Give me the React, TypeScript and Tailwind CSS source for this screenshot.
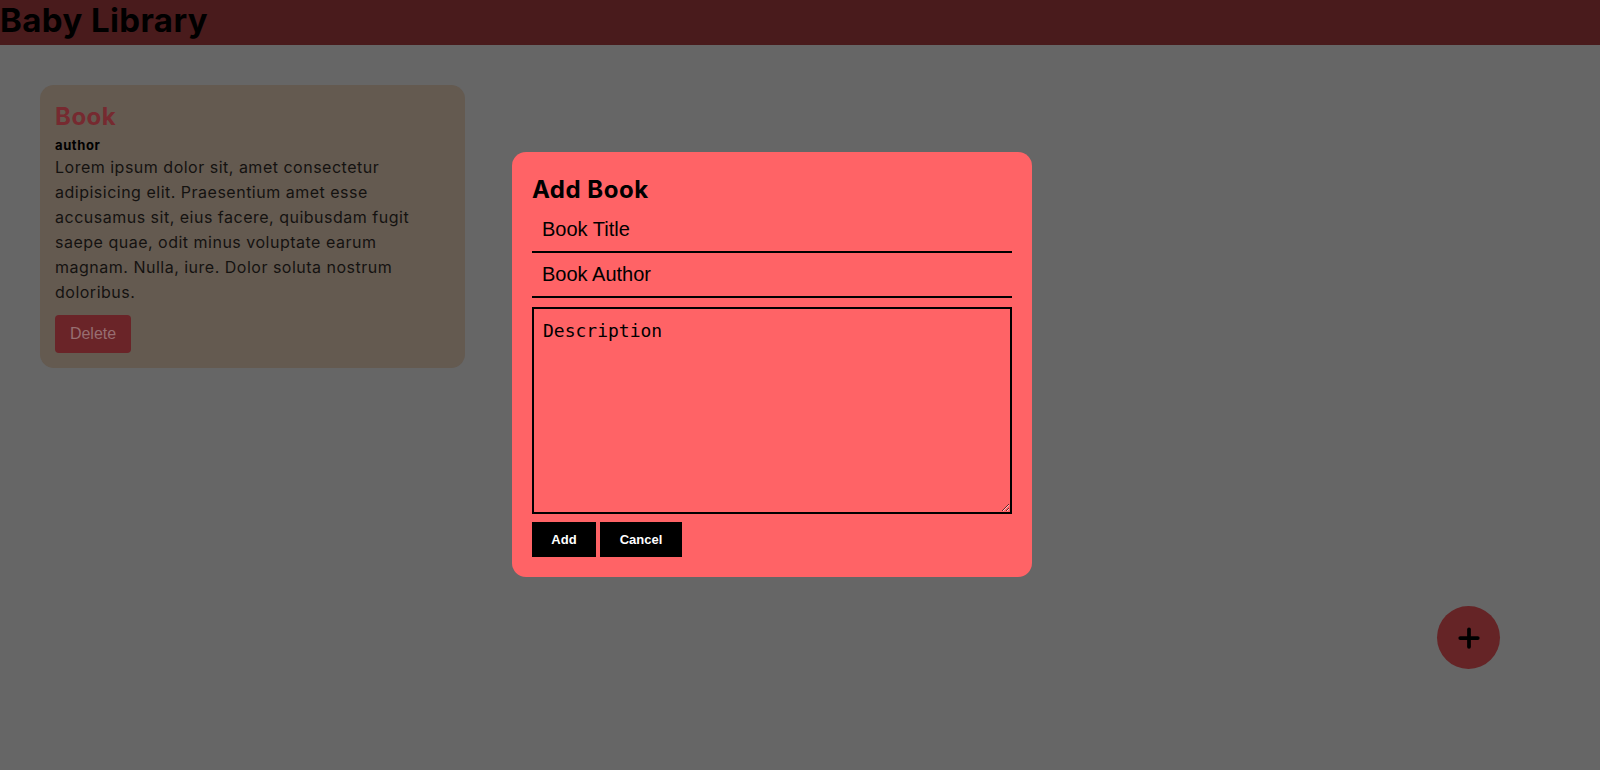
import { Plus } from 'lucide-react';

const lorem =
  'Lorem ipsum dolor sit, amet consectetur adipisicing elit. Praesentium amet esse accusamus sit, eius facere, quibusdam fugit saepe quae, odit minus voluptate earum magnam. Nulla, iure. Dolor soluta nostrum doloribus.';

export default function App() {
  return (
    <div className="relative min-h-[770px] w-full overflow-hidden bg-[#666666] font-['Inter',sans-serif]">
      {/* Header */}
      <header className="h-[45px] bg-[#491b1c]">
        <h1 className="m-0 text-[33px] font-bold leading-[41px] tracking-[0.4px] text-black">
          Baby Library
        </h1>
      </header>

      {/* Book list */}
      <main className="px-[40px] pt-[40px]">
        <div className="w-[425px] rounded-[14px] bg-[#645a50] px-[15px] pt-[14px] pb-[15px]">
          <h2 className="text-[24px] font-bold leading-[36px] tracking-[0.5px] text-[#762a30]">Book</h2>
          <p className="text-[13px] font-bold leading-[20px] tracking-[0.6px] text-black">author</p>
          <p className="text-[16px] leading-[25px] tracking-[0.5px] text-[#141210]">{lorem}</p>
          <button className="mt-[10px] h-[38px] w-[76px] rounded-[4px] bg-[#6a2428] font-['Liberation_Sans',sans-serif] text-[16px] text-[#976e71]">
            Delete
          </button>
        </div>
      </main>

      {/* Add book modal */}
      <div className="absolute left-[512px] top-[152px] w-[520px] rounded-[14px] bg-[#ff6366] px-[20px] pt-[20px] pb-[20px]">
        <h2 className="text-[24px] font-bold leading-[36px] tracking-[0.5px] text-black">Add Book</h2>
        <input
          placeholder="Book Title"
          className="block h-[45px] w-full border-b-2 border-black bg-transparent px-[10px] font-['Liberation_Sans',sans-serif] text-[20px] text-black outline-none placeholder:text-black"
        />
        <input
          placeholder="Book Author"
          className="block h-[45px] w-full border-b-2 border-black bg-transparent px-[10px] font-['Liberation_Sans',sans-serif] text-[20px] text-black outline-none placeholder:text-black"
        />
        <textarea
          placeholder="Description"
          className="mt-[9px] block h-[207px] w-full resize-y border-2 border-black bg-transparent px-[9px] py-[8px] font-['DejaVu_Sans_Mono',monospace] text-[18px] text-black outline-none placeholder:text-black"
        />
        <div className="mt-[8px] flex gap-[4px]">
          <button className="h-[35px] w-[64px] bg-black font-['Liberation_Sans',sans-serif] text-[13px] font-bold text-white">
            Add
          </button>
          <button className="h-[35px] w-[82px] bg-black font-['Liberation_Sans',sans-serif] text-[13px] font-bold text-white">
            Cancel
          </button>
        </div>
      </div>

      {/* Floating add button */}
      <button className="absolute bottom-[101px] right-[100px] flex h-[63px] w-[63px] items-center justify-center rounded-full bg-[#652426]">
        <Plus className="h-[30px] w-[30px] text-black" strokeWidth={3} />
      </button>
    </div>
  );
}
